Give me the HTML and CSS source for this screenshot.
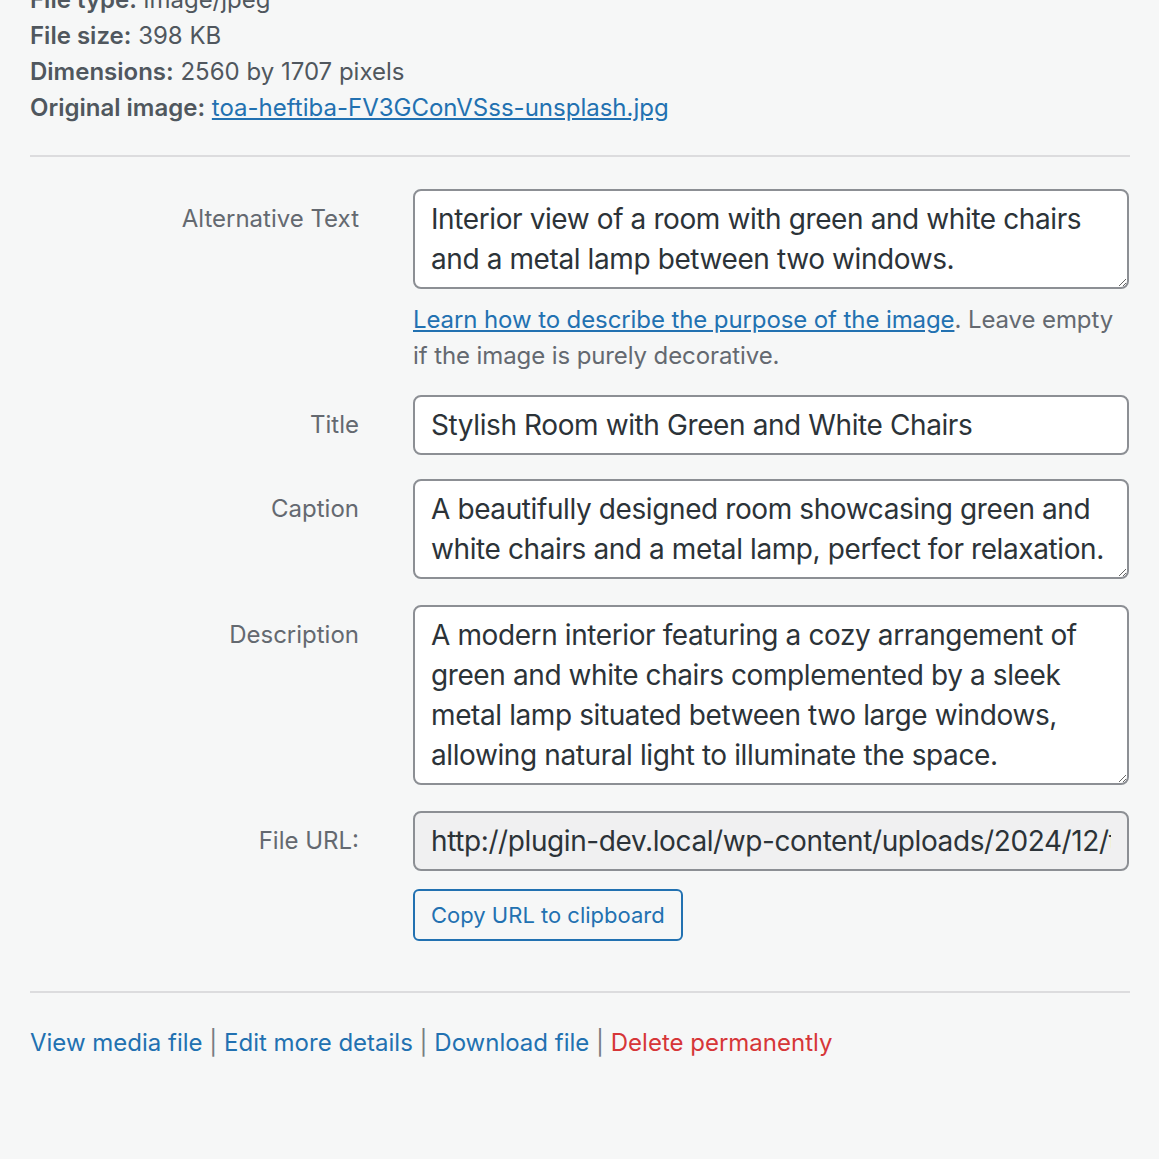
FILE: index.html
```html
<!DOCTYPE html>
<html lang="en">
<head>
    <meta charset="UTF-8">
    <meta name="viewport" content="width=device-width, initial-scale=1.0">
    <title>Attachment Details</title>
    <link rel="stylesheet" href="styles.css">
</head>
<body>
    <div class="attachment-details">
        <div class="attachment-info">
            <div class="info-line"><strong>File type:</strong> image/jpeg</div>
            <div class="info-line"><strong>File size:</strong> 398 KB</div>
            <div class="info-line"><strong>Dimensions:</strong> 2560 by 1707 pixels</div>
            <div class="info-line"><strong>Original image:</strong> <a href="#">toa-heftiba-FV3GConVSss-unsplash.jpg</a></div>
        </div>

        <div class="settings">
            <div class="setting setting-with-help">
                <label class="name" for="alt-text">Alternative Text</label>
                <div class="field">
                    <textarea id="alt-text" class="rows-2">Interior view of a room with green and white chairs and a metal lamp between two windows.</textarea>
                    <p class="description"><a href="#">Learn how to describe the purpose of the image</a>. Leave empty if the image is purely decorative.</p>
                </div>
            </div>

            <div class="setting">
                <label class="name" for="title">Title</label>
                <div class="field">
                    <input type="text" id="title" value="Stylish Room with Green and White Chairs">
                </div>
            </div>

            <div class="setting setting-area">
                <label class="name" for="caption">Caption</label>
                <div class="field">
                    <textarea id="caption" class="rows-2">A beautifully designed room showcasing green and white chairs and a metal lamp, perfect for relaxation.</textarea>
                </div>
            </div>

            <div class="setting setting-area">
                <label class="name" for="description">Description</label>
                <div class="field">
                    <textarea id="description" class="rows-4">A modern interior featuring a cozy arrangement of green and white chairs complemented by a sleek metal lamp situated between two large windows, allowing natural light to illuminate the space.</textarea>
                </div>
            </div>

            <div class="setting setting-last">
                <label class="name" for="file-url">File URL:</label>
                <div class="field">
                    <input type="text" id="file-url" class="readonly" readonly value="http://plugin-dev.local/wp-content/uploads/2024/12/toa-heftiba-FV3GConVSss-unsplash.jpg">
                    <button type="button" class="copy-btn">Copy URL to clipboard</button>
                </div>
            </div>
        </div>

        <div class="actions">
            <a href="#">View media file</a> <span class="sep">|</span> <a href="#">Edit more details</a> <span class="sep">|</span> <a href="#">Download file</a> <span class="sep">|</span> <a href="#" class="delete">Delete permanently</a>
        </div>
    </div>
</body>
</html>
```

FILE: styles.css
```css
* {
    margin: 0;
    padding: 0;
    box-sizing: border-box;
}

body {
    font-family: Inter, Roboto, 'Liberation Sans', sans-serif;
    background: #f6f7f7;
    color: #50575e;
    overflow: hidden;
}

.attachment-details {
    padding: 0 29px 0 30px;
}

a {
    color: #2271b1;
}

.attachment-info {
    margin-top: -18px;
    padding-bottom: 29px;
    border-bottom: 2px solid #dcdcde;
}

.info-line {
    font-size: 24px;
    line-height: 36px;
}

.info-line strong {
    font-weight: 600;
}

.settings {
    padding-top: 32px;
    padding-bottom: 50px;
    border-bottom: 2px solid #dcdcde;
}

.setting {
    display: grid;
    grid-template-columns: 329px 716px;
    column-gap: 54px;
    margin-bottom: 24px;
}

.setting-area {
    margin-bottom: 26px;
}

.setting-with-help {
    margin-bottom: 21px;
}

.setting-last {
    margin-bottom: 0;
}

.setting .name {
    text-align: right;
    font-size: 24px;
    line-height: 36px;
    color: #646970;
    padding-top: 12px;
}

.field textarea,
.field input {
    display: block;
    width: 100%;
    font-family: inherit;
    font-size: 28px;
    letter-spacing: -0.4px;
    line-height: 40px;
    color: #2c3338;
    background: #fff;
    border: 2px solid #8c8f94;
    border-radius: 8px;
    padding: 8px 16px;
    resize: vertical;
    overflow: hidden;
}

.field textarea.rows-2 {
    height: 100px;
}

.field textarea.rows-4 {
    height: 180px;
}

.field input {
    height: 60px;
}

.field input.readonly {
    background: #f0f0f1;
}

.description {
    margin-top: 13px;
    font-size: 24px;
    letter-spacing: -0.1px;
    line-height: 36px;
    color: #646970;
}

.copy-btn {
    display: block;
    margin-top: 18px;
    height: 52px;
    padding: 0 16px;
    font-family: inherit;
    font-size: 22px;
    color: #2271b1;
    background: #f6f7f7;
    border: 2px solid #2271b1;
    border-radius: 6px;
}

.actions {
    padding-top: 32px;
    font-size: 24px;
    line-height: 36px;
}

.actions a {
    text-decoration: none;
}

.actions .sep {
    color: #787c82;
}

.actions .delete {
    color: #d63638;
}
```
